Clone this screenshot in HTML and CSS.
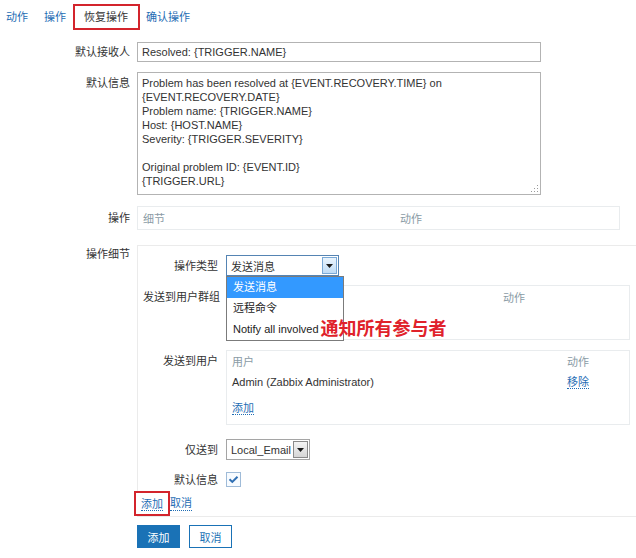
FILE: index.html
```html
<!DOCTYPE html>
<html lang="zh-CN">
<head>
  <meta charset="UTF-8" />
  <title>恢复操作</title>
  <link rel="stylesheet" href="styles.css">
</head>
<body>

  <nav class="tabs">
    <a class="tab" href="#">动作</a>
    <a class="tab" href="#">操作</a>
    <span class="tab tab-current">恢复操作</span>
    <a class="tab" href="#">确认操作</a>
  </nav>

  <form class="form">
    <div class="row">
      <label class="label label-input">默认接收人</label>
      <input class="text" type="text" value="Resolved: {TRIGGER.NAME}" />
    </div>

    <div class="row row-message">
      <label class="label label-message">默认信息</label>
      <div class="message">Problem has been resolved at {EVENT.RECOVERY.TIME} on<br>{EVENT.RECOVERY.DATE}<br>Problem name: {TRIGGER.NAME}<br>Host: {HOST.NAME}<br>Severity: {TRIGGER.SEVERITY}<br><br>Original problem ID: {EVENT.ID}<br>{TRIGGER.URL}
        <svg class="grip" width="9" height="9" viewBox="0 0 9 9">
          <rect x="7" y="1" width="1" height="1" fill="#9a9a9a"/>
          <rect x="4" y="4" width="1" height="1" fill="#9a9a9a"/>
          <rect x="7" y="4" width="1" height="1" fill="#9a9a9a"/>
          <rect x="1" y="7" width="1" height="1" fill="#9a9a9a"/>
          <rect x="4" y="7" width="1" height="1" fill="#9a9a9a"/>
          <rect x="7" y="7" width="1" height="1" fill="#9a9a9a"/>
        </svg>
      </div>
    </div>

    <div class="row row-ops">
      <label class="label label-ops">操作</label>
      <div class="ops-table">
        <span>细节</span>
        <span>动作</span>
      </div>
    </div>

    <div class="row row-details">
      <label class="label label-details">操作细节</label>
      <div class="details">

        <div class="sub">
          <label class="sub-label">操作类型</label>
          <div class="select select-type">
            <span>发送消息</span>
            <span class="select-btn select-btn-blue">
              <svg width="7" height="4" viewBox="0 0 7 4"><path d="M0 0h7L3.5 4z" fill="#1b1b1b"/></svg>
            </span>
            <div class="dropdown">
              <div class="dropdown-item active">发送消息</div>
              <div class="dropdown-item">远程命令</div>
              <div class="dropdown-item">Notify all involved<span class="note">通知所有参与者</span></div>
            </div>
          </div>
        </div>

        <div class="sub sub-group">
          <label class="sub-label sub-label-wide">发送到用户群组</label>
          <div class="group group-groups">
            <div class="group-head">
              <span></span>
              <span>动作</span>
            </div>
          </div>
        </div>

        <div class="sub sub-users">
          <label class="sub-label">发送到用户</label>
          <div class="group group-users">
            <div class="group-head">
              <span>用户</span>
              <span>动作</span>
            </div>
            <div class="group-row">
              <span>Admin (Zabbix Administrator)</span>
              <span><a class="link" href="#">移除</a></span>
            </div>
            <div class="group-add"><a class="link" href="#">添加</a></div>
          </div>
        </div>

        <div class="sub sub-media">
          <label class="sub-label">仅送到</label>
          <div class="select select-media">
            <span>Local_Email</span>
            <span class="select-btn select-btn-grey">
              <svg width="7" height="4" viewBox="0 0 7 4"><path d="M0 0h7L3.5 4z" fill="#1b1b1b"/></svg>
            </span>
          </div>
        </div>

        <div class="sub sub-check">
          <label class="sub-label">默认信息</label>
          <svg class="checkbox" width="15" height="15" viewBox="0 0 15 15">
            <rect x="0.5" y="0.5" width="14" height="14" fill="#f7fbff" stroke="#9fbbd8"/>
            <path d="M3.5 7.3l2.8 2.6 5.2-5.2" fill="none" stroke="#2f6fb3" stroke-width="2"/>
          </svg>
        </div>

        <div class="sub-actions">
          <span class="mark"><a class="link" href="#">添加</a></span>
          <a class="link" href="#">取消</a>
        </div>
      </div>
    </div>

    <div class="row row-buttons">
      <span></span>
      <div class="buttons">
        <button class="btn btn-primary" type="button">添加</button>
        <button class="btn" type="button">取消</button>
      </div>
    </div>
  </form>

</body>
</html>
```

FILE: styles.css
```css
html, body {
  margin: 0;
  padding: 0;
  overflow: hidden;
}
body {
  font-family: "Liberation Sans", "Noto Sans CJK SC", sans-serif;
  font-size: 11px;
  color: #333;
  background: #fff;
}
.tabs {
  display: flex;
  align-items: center;
  height: 33px;
  padding-left: 6px;
}
.tab {
  color: #1f6db4;
  text-decoration: none;
  line-height: 14px;
  margin-right: 16px;
}
.tab-current {
  color: #333;
  border: 2px solid #d3242c;
  padding: 4px 10px 4px 9px;
  margin-left: -9px;
  margin-right: 6px;
}
.form {
  padding-top: 9px;
}
.row {
  display: grid;
  grid-template-columns: 130px 1fr;
  column-gap: 7px;
  align-items: start;
  margin-bottom: 10px;
}
.label {
  text-align: right;
  line-height: 14px;
  color: #333;
}
.label-input {
  padding-top: 3px;
}
.label-message {
  padding-top: 4px;
}
.label-ops {
  padding-top: 5px;
}
.label-details {
  padding-top: 2px;
}
.text {
  width: 404px;
  height: 20px;
  box-sizing: border-box;
  border: 1px solid #b3b3b3;
  padding: 0 4px;
  margin: 0;
  font: inherit;
  color: #333;
}
.row-message {
  margin-bottom: 11px;
}
.message {
  position: relative;
  width: 404px;
  height: 123px;
  box-sizing: border-box;
  border: 1px solid #b3b3b3;
  padding: 3px 4px;
  line-height: 14px;
}
.grip {
  position: absolute;
  right: 1px;
  bottom: 1px;
}
.row-ops {
  margin-bottom: 15px;
}
.ops-table {
  width: 483px;
  height: 24px;
  box-sizing: border-box;
  border: 1px solid #e9ecee;
  padding: 0 5px;
  display: grid;
  grid-template-columns: 257px 1fr;
  align-items: center;
  color: #8a9ba5;
}
.row-details {
  margin-bottom: 8px;
}
.details {
  width: 510px;
  box-sizing: border-box;
  border: 1px solid #ebebeb;
  border-right: none;
  padding-top: 9px;
}
.sub {
  display: grid;
  grid-template-columns: 80px 1fr;
  column-gap: 8px;
  align-items: center;
}
.sub-label {
  text-align: right;
  line-height: 14px;
  white-space: nowrap;
}
.sub-label-wide {
  text-align: left;
  padding-left: 5px;
}
.select {
  position: relative;
  display: flex;
  align-items: center;
  height: 21px;
  box-sizing: border-box;
  padding-left: 4px;
  background: #fff;
}
.select-type {
  width: 113px;
  border: 1px solid #5584b3;
}
.select-media {
  width: 84px;
  border: 1px solid #a5a5a5;
}
.select-btn {
  margin-left: auto;
  margin-right: 1px;
  width: 15px;
  height: 17px;
  box-sizing: border-box;
  display: flex;
  align-items: center;
  justify-content: center;
}
.select-btn-blue {
  border: 1px solid #7aa9d6;
  background: linear-gradient(#eaf4fd, #bfdcf6);
}
.select-btn-grey {
  border: 1px solid #8a8a8a;
  background: linear-gradient(#f4f4f4, #d6d6d6);
}
.dropdown {
  position: absolute;
  top: calc(100% + 1px);
  left: -1px;
  width: 118px;
  box-sizing: border-box;
  border: 1px solid #7b7b7b;
  background: #fff;
  z-index: 2;
}
.dropdown-item {
  height: 21px;
  line-height: 21px;
  padding-left: 6px;
  white-space: nowrap;
  color: #222;
}
.dropdown-item.active {
  background: #3399ff;
  color: #fff;
}
.note {
  color: #e0222b;
  font-size: 18px;
  font-weight: bold;
  margin-left: 2px;
  vertical-align: top;
  line-height: 21px;
}
.sub-group,
.sub-users {
  align-items: start;
}
.sub-group {
  margin-top: 9px;
}
.sub-group .sub-label {
  padding-top: 5px;
}
.sub-users {
  margin-top: 10px;
}
.sub-users .sub-label {
  padding-top: 4px;
}
.group {
  width: 404px;
  box-sizing: border-box;
  border: 1px solid #e9ecee;
  padding: 0 5px;
  line-height: 14px;
}
.group-groups {
  height: 55px;
  padding-top: 5px;
}
.group-users {
  height: 75px;
  padding-top: 4px;
}
.group-head,
.group-row {
  display: grid;
}
.group-groups .group-head {
  grid-template-columns: 271px 1fr;
}
.group-users .group-head,
.group-users .group-row {
  grid-template-columns: 335px 1fr;
}
.group-head {
  color: #8a9ba5;
}
.group-row {
  margin-top: 6px;
}
.group-add {
  margin-top: 12px;
}
.link {
  color: #1f6db4;
  text-decoration: none;
  border-bottom: 1px dotted #1f6db4;
}
.sub-media {
  margin-top: 14px;
}
.sub-check {
  margin-top: 12px;
}
.checkbox {
  display: block;
}
.sub-actions {
  display: flex;
  align-items: flex-end;
  margin-top: 4px;
  margin-left: -4px;
  line-height: 14px;
}
.mark {
  border: 2px solid #d3242c;
  padding: 4px 5px 3px;
  background: #fff;
}
.sub-actions > .link {
  margin-bottom: 5px;
}
.buttons {
  display: flex;
  gap: 9px;
}
.btn {
  width: 43px;
  height: 23px;
  margin: 0;
  padding: 0;
  border: 1px solid #1a72b6;
  background: #fff;
  color: #1a72b6;
  font: inherit;
  cursor: pointer;
}
.btn-primary {
  background: #1a72b6;
  color: #fff;
}
```
